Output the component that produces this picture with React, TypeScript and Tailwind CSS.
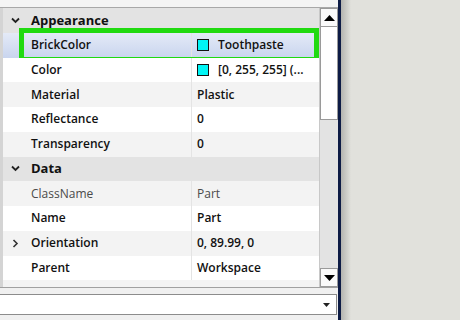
import React from "react";

type Row = {
  name: string;
  value?: string;
  swatch?: boolean;
  header?: boolean;
  readOnly?: boolean;
  expand?: boolean;
  selected?: boolean;
  alt?: boolean;
};

const rows: Row[] = [
  { name: "Appearance", header: true },
  { name: "BrickColor", value: "Toothpaste", swatch: true, selected: true },
  { name: "Color", value: "[0, 255, 255] (...", swatch: true },
  { name: "Material", value: "Plastic", alt: true },
  { name: "Reflectance", value: "0" },
  { name: "Transparency", value: "0", alt: true },
  { name: "Data", header: true },
  { name: "ClassName", value: "Part", readOnly: true, alt: true },
  { name: "Name", value: "Part" },
  { name: "Orientation", value: "0, 89.99, 0", expand: true, alt: true },
  { name: "Parent", value: "Workspace" },
];

const Chevron = ({ down }: { down: boolean }) => (
  <svg width="9" height="9" viewBox="0 0 9 9" className="shrink-0">
    {down ? (
      <path d="M1 2.5 L4.5 6 L8 2.5" fill="none" stroke="#222" strokeWidth="1.8" />
    ) : (
      <path d="M2.5 1 L6 4.5 L2.5 8" fill="none" stroke="#333" strokeWidth="1.6" />
    )}
  </svg>
);

const Arrow = ({ up }: { up: boolean }) => (
  <svg width="11" height="6" viewBox="0 0 11 6">
    {up ? <path d="M0 6 L5.5 0 L11 6 Z" fill="#000" /> : <path d="M0 0 L5.5 6 L11 0 Z" fill="#000" />}
  </svg>
);

const PropRow = ({ row }: { row: Row }) => {
  if (row.header) {
    return (
      <div className="h-[24.75px] flex items-center bg-[#e3e3e3] pl-[8px]">
        <Chevron down />
        <span className="ml-[11px] text-[13px] font-bold text-[#111]">{row.name}</span>
      </div>
    );
  }
  const bg = row.selected
    ? "bg-gradient-to-b from-[#e4eaf7] to-[#c9d5ee]"
    : row.alt
    ? "bg-[#f3f3f3]"
    : "bg-white";
  const text = row.readOnly ? "font-normal text-[#4a4a4a]" : "font-semibold text-[#111]";
  return (
    <div className={`relative h-[24.75px] flex items-center ${bg}`}>
      <div className="w-[189px] h-full flex items-center pl-[8px] border-r border-[#e4e4e4]">
        <span className="w-[9px] flex items-center">{row.expand && <Chevron down={false} />}</span>
        <span className={`ml-[11px] text-[12px] ${text}`}>{row.name}</span>
      </div>
      <div className="flex-1 h-full flex items-center pl-[5px]">
        {row.swatch && (
          <span className="w-[12px] h-[12px] bg-[#00f5f5] border border-[#111] mr-[9px]" />
        )}
        <span className={`text-[12px] whitespace-nowrap ${text}`}>{row.value}</span>
      </div>
      {row.selected && (
        <div className="absolute left-[16px] right-[0px] top-[-5px] bottom-[-4px] border-[5px] border-[#20da10]" />
      )}
    </div>
  );
};

const App: React.FC = () => {
  return (
    <div className="w-[460px] h-[320px] flex bg-[#e1e1dc] overflow-hidden" style={{ fontFamily: '"Open Sans", sans-serif' }}>
      <div className="w-[338px] h-full flex flex-col bg-[#f0f0f0]">
        <div className="h-[8px] border-b border-[#a8a8a8] bg-[#f4f4f4]" />
        <div className="h-[280px] flex border-b border-[#a0a0a0]">
          <div className="flex-1 flex flex-col border-l-[3px] border-[#d4d4d4] bg-[#f3f3f3] overflow-hidden">
            {rows.map((r) => (
              <PropRow key={r.name} row={r} />
            ))}
          </div>
          <div className="w-[19px] flex flex-col border-l border-[#c8c8c8] bg-[#e3e3e3]">
            <div className="h-[19px] flex items-center justify-center bg-[#fafafa] border border-[#9a9a9a]">
              <Arrow up />
            </div>
            <div className="h-[93px] bg-white border border-t-0 border-[#9a9a9a]" />
            <div className="flex-1" />
            <div className="h-[19px] flex items-center justify-center bg-[#fafafa] border border-[#9a9a9a]">
              <Arrow up={false} />
            </div>
          </div>
        </div>
        <div className="h-[6px]" />
        <div className="h-[21px] flex items-center justify-end bg-white border-y border-r border-[#8c8c8c] pr-[6px] mr-[1px]">
          <svg width="7" height="4" viewBox="0 0 7 4">
            <path d="M0 0 L3.5 4 L7 0 Z" fill="#222" />
          </svg>
        </div>
        <div className="flex-1" />
      </div>
      <div className="w-[3px] h-full bg-[#0d1b45]" />
      <div className="w-[10px] h-full bg-gradient-to-r from-[#b4b4b0] to-[#e1e1dc]" />
      <div className="flex-1" />
    </div>
  );
};

export default App;
